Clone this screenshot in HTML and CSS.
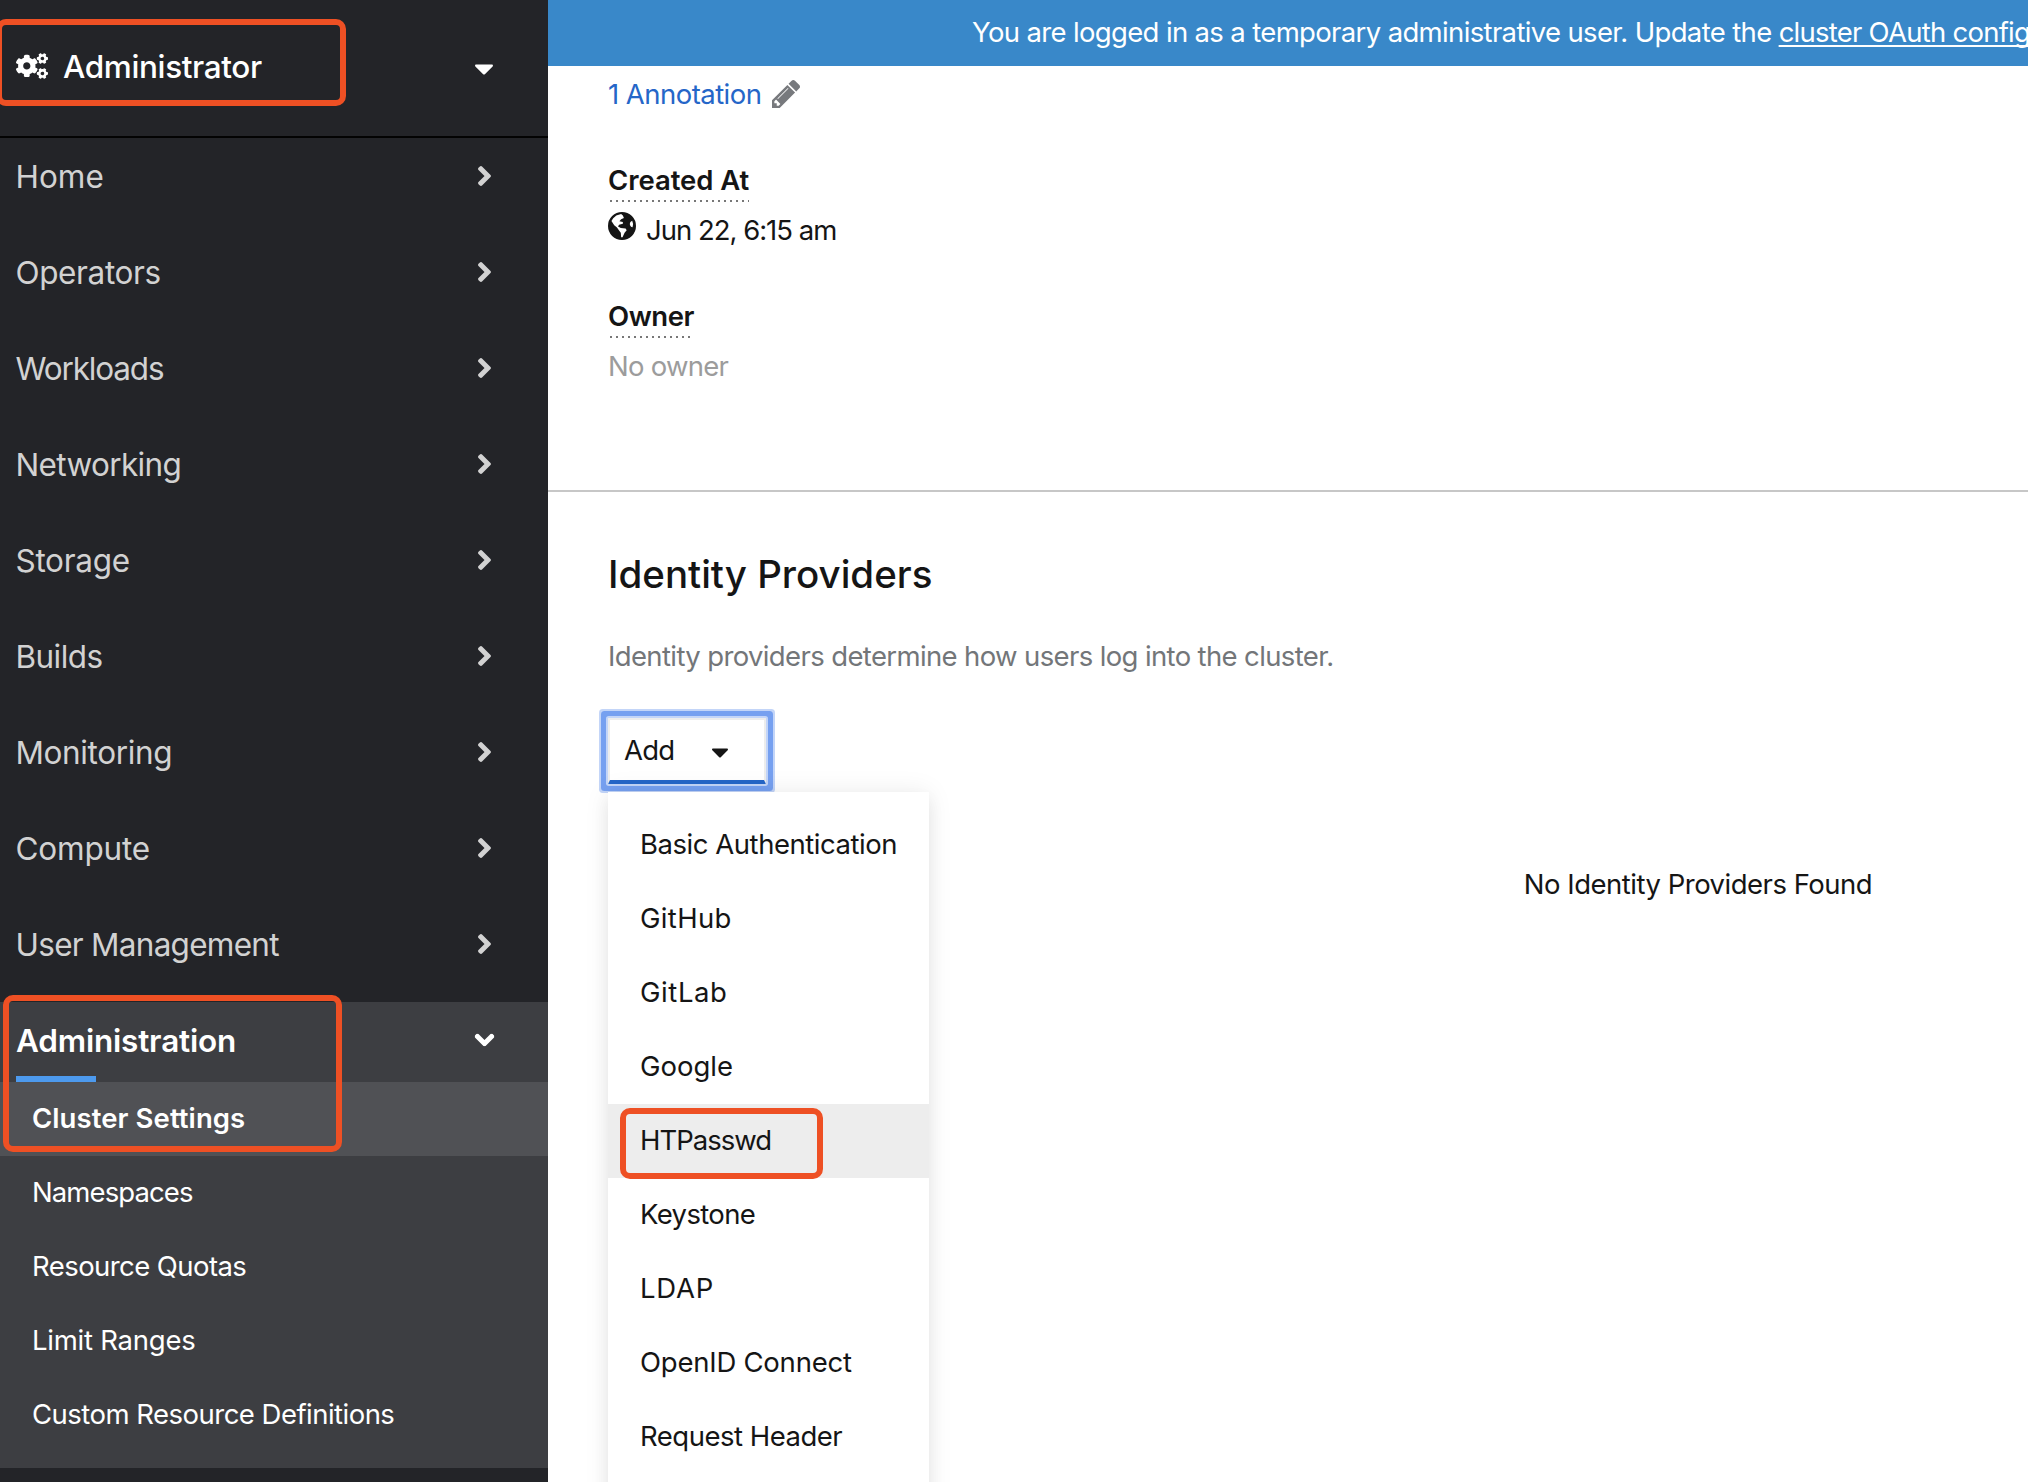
FILE: index.html
```html
<!DOCTYPE html>
<html lang="en">
<head>
<meta charset="utf-8">
<title>Cluster Settings</title>
<link rel="stylesheet" href="styles.css">
</head>
<body>
<svg class="defs" width="0" height="0">
  <symbol id="angle" viewBox="24.7 96 206.6 320"><path d="M224.3 273l-136 136c-9.4 9.4-24.6 9.4-33.9 0l-22.6-22.6c-9.4-9.4-9.4-24.6 0-33.9l96.4-96.4-96.4-96.4c-9.4-9.4-9.4-24.6 0-33.9L54.3 103c9.4-9.4 24.6-9.4 33.9 0l136 136c9.5 9.4 9.5 24.6.1 34z"/></symbol>
  <symbol id="caret" viewBox="11 192 298 169"><path d="M31.3 192h257.3c17.8 0 26.7 21.5 14.1 34.1L174.1 354.8c-7.8 7.8-20.5 7.8-28.3 0L17.2 226.1C4.6 213.5 13.5 192 31.3 192z"/></symbol>
</svg>
<div class="app">
  <aside class="sidebar">
    <button class="perspective">
      <svg class="cogs" viewBox="0 0 640 512"><path id="cog" d="M512.1 191l-8.2 14.3c-3 5.3-9.4 7.5-15.1 5.4-11.8-4.4-22.6-10.7-32.1-18.6-4.6-3.8-5.8-10.5-2.8-15.7l8.2-14.3c-6.9-8-12.3-17.3-15.9-27.4h-16.5c-6 0-11.2-4.3-12.2-10.3-2-12-2.1-24.6 0-37.1 1-6 6.2-10.4 12.2-10.4h16.5c3.6-10.1 9-19.4 15.9-27.4l-8.2-14.3c-3-5.2-1.9-11.9 2.8-15.7 9.5-7.9 20.4-14.2 32.1-18.6 5.7-2.1 12.1.1 15.1 5.4l8.2 14.3c10.5-1.9 21.2-1.9 31.7 0L552 6.3c3-5.3 9.4-7.5 15.1-5.4 11.8 4.4 22.6 10.7 32.1 18.6 4.6 3.8 5.8 10.5 2.8 15.7l-8.2 14.3c6.9 8 12.3 17.3 15.9 27.4h16.5c6 0 11.2 4.3 12.2 10.3 2 12 2.1 24.6 0 37.1-1 6-6.2 10.4-12.2 10.4h-16.5c-3.6 10.1-9 19.4-15.9 27.4l8.2 14.3c3 5.2 1.9 11.9-2.8 15.7-9.5 7.9-20.4 14.2-32.1 18.6-5.7 2.1-12.1-.1-15.1-5.4l-8.2-14.3c-10.4 1.9-21.2 1.9-31.7 0zm-10.5-58.8c38.5 29.6 82.4-14.3 52.8-52.8-38.5-29.7-82.4 14.3-52.8 52.8z"/><use href="#cog" y="299"/><path d="M386.3 286.1l33.7 16.8c10.1 5.8 14.5 18.1 10.5 29.1-8.9 24.2-26.4 46.4-42.6 65.8-7.4 8.9-20.2 11.1-30.3 5.3l-29.1-16.8c-16 13.7-34.6 24.6-54.9 31.7v33.6c0 11.6-8.3 21.6-19.7 23.6-24.6 4.2-50.4 4.4-75.9 0-11.5-2-20-11.9-20-23.6V418c-20.3-7.2-38.9-18-54.9-31.7L74 403c-10 5.8-22.9 3.6-30.3-5.3-16.2-19.4-33.3-41.6-42.2-65.7-4-10.9.4-23.2 10.5-29.1l33.3-16.8c-3.9-20.9-3.9-42.4 0-63.4L12 205.8c-10.1-5.8-14.6-18.1-10.5-29 8.9-24.2 26-46.4 42.2-65.8 7.4-8.9 20.2-11.1 30.3-5.3l29.1 16.8c16-13.7 34.6-24.6 54.9-31.7V57.1c0-11.5 8.2-21.5 19.6-23.5 24.6-4.2 50.5-4.4 76-.1 11.5 2 20 11.9 20 23.6v33.6c20.3 7.2 38.9 18 54.9 31.7l29.1-16.8c10-5.8 22.9-3.6 30.3 5.3 16.2 19.4 33.2 41.6 42.1 65.8 4 10.9.1 23.2-10 29.1l-33.7 16.8c3.9 21 3.9 42.5 0 63.5zm-117.6 21.1c59.2-77-28.7-164.9-105.7-105.7-59.2 77 28.7 164.9 105.7 105.7z"/></svg>
      <span class="perspective-name">Administrator</span>
      <svg class="caret"><use href="#caret"/></svg>
    </button>
    <nav class="nav">
      <a class="nav-item"><span>Home</span><svg class="angle"><use href="#angle"/></svg></a>
      <a class="nav-item"><span>Operators</span><svg class="angle"><use href="#angle"/></svg></a>
      <a class="nav-item"><span>Workloads</span><svg class="angle"><use href="#angle"/></svg></a>
      <a class="nav-item"><span>Networking</span><svg class="angle"><use href="#angle"/></svg></a>
      <a class="nav-item"><span>Storage</span><svg class="angle"><use href="#angle"/></svg></a>
      <a class="nav-item"><span>Builds</span><svg class="angle"><use href="#angle"/></svg></a>
      <a class="nav-item"><span>Monitoring</span><svg class="angle"><use href="#angle"/></svg></a>
      <a class="nav-item"><span>Compute</span><svg class="angle"><use href="#angle"/></svg></a>
      <a class="nav-item"><span>User Management</span><svg class="angle"><use href="#angle"/></svg></a>
    </nav>
    <div class="nav-section">
      <a class="nav-item expanded"><span>Administration</span><svg class="angle"><use href="#angle"/></svg></a>
      <div class="subnav">
        <a class="subnav-item current">Cluster Settings</a>
        <a class="subnav-item">Namespaces</a>
        <a class="subnav-item">Resource Quotas</a>
        <a class="subnav-item">Limit Ranges</a>
        <a class="subnav-item">Custom Resource Definitions</a>
      </div>
    </div>
  </aside>
  <main class="main">
    <div class="banner">You are logged in as a temporary administrative user. Update the <a class="banner-link">cluster OAuth config</a></div>
    <section class="details">
      <a class="annotation"><span>1 Annotation</span>
        <svg class="pencil" viewBox="0 21 1515 1515"><path d="M363 1408l91-91-235-235-91 91v107h128v128h107zm523-928q0-22-22-22-10 0-17 7l-542 542q-7 7-7 17 0 22 22 22 10 0 17-7l542-542q7-7 7-17zm-54-192l416 416-832 832h-416v-416zm683 96q0 53-37 90l-166 166-416-416 166-165q36-38 90-38 53 0 91 38l235 234q37 39 37 91z"/></svg>
      </a>
      <dl class="terms">
        <dt class="created">Created At</dt>
        <dd class="time"><svg class="globe" viewBox="0 0 81 81"><path fill-rule="evenodd" d="M40.500 0a40.500 40.500 0 1 1 0 81a40.500 40.500 0 1 1 0-81zM10 26L15 18L24 10L38 6L43 10L46 17L38 21L33 27L43 29V34L32 37L29 42L37 46L51 48L54 53L48 60L42 73L38 73L37 60L31 52L26 45L18 38zM70 25q-7 2-7 10q1 9 8 9q4-9-1-19z"/></svg><span>Jun 22, 6:15 am</span></dd>
        <dt class="owner">Owner</dt>
        <dd class="no-owner">No owner</dd>
      </dl>
    </section>
    <section class="providers">
      <h2 class="title">Identity Providers</h2>
      <p class="hint">Identity providers determine how users log into the cluster.</p>
      <div class="dropdown">
        <button class="toggle"><span>Add</span><svg class="caret"><use href="#caret"/></svg></button>
        <div class="menu">
          <a class="option">Basic Authentication</a>
          <a class="option">GitHub</a>
          <a class="option">GitLab</a>
          <a class="option">Google</a>
          <a class="option hovered">HTPasswd</a>
          <a class="option">Keystone</a>
          <a class="option">LDAP</a>
          <a class="option">OpenID Connect</a>
          <a class="option">Request Header</a>
        </div>
      </div>
      <div class="empty">No Identity Providers Found</div>
    </section>
  </main>
  <div class="mark mark-perspective"></div>
  <div class="mark mark-settings"></div>
  <div class="mark mark-option"></div>
</div>
</body>
</html>
```
FILE: styles.css
```css
* { box-sizing: border-box; }
body { margin: 0; font: 400 27.5px/42px Inter, sans-serif; color: #151515; background: #fff; }
button { font: inherit; color: inherit; background: none; border: 0; padding: 0; text-align: left; }
svg { fill: currentColor; flex: none; display: block; }
.defs { position: absolute; }
.app { position: relative; display: flex; width: 2028px; height: 1482px; overflow: hidden; }

/* Sidebar */
.sidebar { width: 548px; flex: none; background: #232428; color: #fff; display: flex; flex-direction: column; }
.perspective { display: flex; align-items: center; height: 138px; padding: 0 55px 4px 16px; border-bottom: 2px solid #030303; }
.cogs { width: 32px; height: 26px; }
.perspective-name { flex: 1; margin: 1px 0 0 15px; font-size: 31.5px; font-weight: 500; letter-spacing: -.37px; }
.perspective .caret { width: 18px; height: 11px; margin-top: 6px; }
.nav { display: flex; flex-direction: column; color: #d2d2d2; }
.nav-item { display: flex; align-items: center; justify-content: space-between; height: 96px; padding: 0 57.500px 19px 15.500px; font-size: 31.5px; }
.nav-item:nth-child(2) { letter-spacing: -.38px; }
.nav-item:nth-child(3) { letter-spacing: -1.16px; }
.nav-item:nth-child(4) { letter-spacing: -.64px; }
.nav-item:nth-child(5) { letter-spacing: -.3px; }
.nav-item:nth-child(6) { letter-spacing: -.56px; }
.nav-item:nth-child(7) { letter-spacing: -.38px; }
.nav-item:nth-child(8) { letter-spacing: -.2px; }
.nav-item:nth-child(9) { letter-spacing: -.72px; }
.angle { width: 13px; height: 20px; margin-top: -2px; }
.nav-section { background: #3d3e42; height: 466px; }
.nav-item.expanded { position: relative; height: 80px; padding: 0 57.500px 3px 16px; font-weight: 600; letter-spacing: -.19px; }
.expanded .angle { transform: rotate(90deg); }
.nav-item.expanded::after { content: ""; position: absolute; left: 16px; bottom: 0; width: 80px; height: 6px; background: #4d9aee; }
.subnav { display: flex; flex-direction: column; }
.subnav-item { height: 74px; padding: 15px 0 0 32px; }
.subnav-item.current { background: #505155; font-weight: 600; letter-spacing: .08px; }
.subnav-item:nth-child(2) { letter-spacing: -.9px; }
.subnav-item:nth-child(3) { letter-spacing: -.57px; }
.subnav-item:nth-child(4) { letter-spacing: -.24px; }
.subnav-item:nth-child(5) { letter-spacing: -.52px; }

/* Content */
.main { flex: 1; min-width: 0; overflow: hidden; }
.banner { height: 66px; padding: 11px 0 0 424px; background: #3988c9; color: #fff; white-space: nowrap; letter-spacing: -.65px; }
.banner-link { letter-spacing: -.75px; text-decoration: underline; text-decoration-thickness: 2px; text-underline-offset: 3px; text-decoration-skip-ink: none; }
.details { height: 426px; padding: 7px 60px 0; border-bottom: 2px solid #c7c7c7; }
.annotation { display: flex; gap: 11px; color: #2566c8; letter-spacing: -.54px; }
.pencil { width: 28px; height: 28px; margin-top: 7px; color: #77797d; }
.terms { margin: 45px 0 0; }
dt { width: fit-content; line-height: 40px; height: 42px; font-weight: 600; background: repeating-linear-gradient(90deg, transparent 0 2px, #777 2px 4px, transparent 4px 6px) 0 100% / 100% 2px no-repeat; }
dd { margin: 7px 0 45px; }
.created { letter-spacing: -.05px; }
.owner { letter-spacing: -.45px; }
.time { display: flex; gap: 10px; letter-spacing: -1px; }
.globe { width: 28px; height: 28px; margin-top: 3px; }
.no-owner { letter-spacing: -.75px; color: #9c9c9c; }
.providers { padding: 58px 60px 0; }
.title { margin: 0; font-size: 38.5px; line-height: 48px; font-weight: 500; letter-spacing: 0; }
.hint { margin: 37px 0 0; color: #737679; letter-spacing: -.63px; }
.dropdown { position: relative; width: 158px; margin-top: 41px; }
.toggle { display: flex; align-items: center; justify-content: space-between; width: 158px; height: 66px; padding: 0 36px 0 14px; border: 2px solid #ededed; border-bottom: 4px solid #2566c8; letter-spacing: -.81px; box-shadow: 0 0 0 2px #c3d5f8, 0 0 0 7px #76a0f0, 0 0 0 9px #c3d5f8; border-radius: 1px; }
.toggle .caret { width: 16px; height: 10px; margin-top: 5px; }
.menu { position: absolute; top: 74px; left: 0; width: 321px; height: 720px; padding-top: 16px; background: #fff; box-shadow: 0 8px 16px rgba(3, 3, 3, .06), 0 0 24px rgba(3, 3, 3, .08); }
.option { display: block; height: 74px; padding: 15px 0 0 32px; }
.option:nth-child(1) { letter-spacing: -.46px; }
.option:nth-child(2) { letter-spacing: .33px; }
.option:nth-child(3) { letter-spacing: .57px; }
.option:nth-child(5) { letter-spacing: -1px; }
.option:nth-child(6) { letter-spacing: -.65px; }
.option:nth-child(7) { letter-spacing: .8px; }
.option:nth-child(8) { letter-spacing: -.23px; }
.option:nth-child(9) { letter-spacing: -.5px; }
.option.hovered { background: #ededed; }
.empty { width: 2180px; margin-top: 79px; text-align: center; letter-spacing: -.5px; }

/* Highlight frames drawn over the interface */
.mark { position: absolute; border: 6px solid #ee5024; border-radius: 10px; }
.mark-perspective { left: -4px; top: 19px; width: 350px; height: 87px; }
.mark-settings { left: 3px; top: 995px; width: 339px; height: 157px; }
.mark-option { left: 620px; top: 1108px; width: 203px; height: 71px; }
```
